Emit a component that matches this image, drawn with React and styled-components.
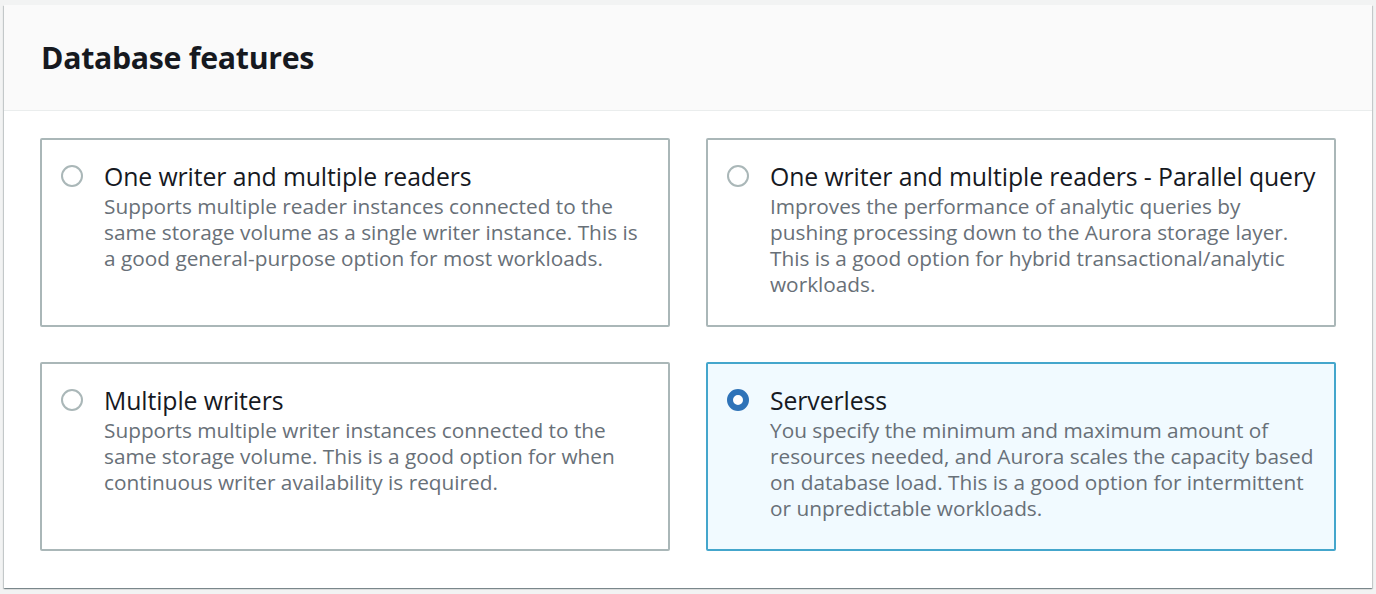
import React, { useState } from "react";
import styled, { createGlobalStyle } from "styled-components";

const Global = createGlobalStyle`
  html, body { margin: 0; padding: 0; background: #f2f3f3; }
  body { font-family: "Open Sans", "Noto Sans", Arial, sans-serif; -webkit-font-smoothing: antialiased; }
  * { box-sizing: border-box; }
`;

const Page = styled.div`
  padding: 5px 4px 7px 4px;
`;

const Panel = styled.section`
  background: #ffffff;
  box-shadow: 0 1px 1px 0 rgba(0, 28, 36, 0.3), 1px 1px 1px 0 rgba(0, 28, 36, 0.15),
    -1px 1px 1px 0 rgba(0, 28, 36, 0.15);
`;

const Header = styled.header`
  background: #fafafa;
  border-bottom: 1px solid #eaeded;
  height: 106px;
  display: flex;
  align-items: center;
  padding: 0 37px;
`;

const Title = styled.h2`
  margin: 0;
  font-size: 30.3px;
  font-weight: 700;
  color: #16191f;
  letter-spacing: -0.3px;
`;

const Body = styled.div`
  padding: 27px 36px 37px 36px;
  display: grid;
  grid-template-columns: 1fr 1fr;
  gap: 35px 36px;
`;

const Tile = styled.label`
  display: flex;
  align-items: flex-start;
  gap: 21px;
  padding: 20px 12px 28px 19px;
  border: 2px solid ${(p) => (p.$selected ? "#44a6cc" : "#aab7b8")};
  border-radius: 2px;
  background: ${(p) => (p.$selected ? "#f1faff" : "#ffffff")};
  cursor: pointer;
`;

const Radio = styled.span`
  flex: none;
  width: 22px;
  height: 22px;
  margin-top: 5px;
  border-radius: 50%;
  border: ${(p) => (p.$checked ? "6px solid #2f73b8" : "2px solid #aab7b8")};
  background: #ffffff;
`;

const Text = styled.div`
  display: flex;
  flex-direction: column;
  min-width: 0;
`;

const OptionTitle = styled.div`
  font-size: 24.8px;
  line-height: 32px;
  margin-bottom: 1px;
  color: #16191f;
  white-space: nowrap;
  letter-spacing: -0.1px;
`;

const Description = styled.div`
  font-size: 20.8px;
  line-height: 26px;
  color: #687078;
  letter-spacing: 0;
`;

const options = [
  {
    id: "one",
    title: "One writer and multiple readers",
    lines: [
      "Supports multiple reader instances connected to the",
      "same storage volume as a single writer instance. This is",
      "a good general-purpose option for most workloads.",
    ],
  },
  {
    id: "pq",
    title: "One writer and multiple readers - Parallel query",
    lines: [
      "Improves the performance of analytic queries by",
      "pushing processing down to the Aurora storage layer.",
      "This is a good option for hybrid transactional/analytic",
      "workloads.",
    ],
  },
  {
    id: "multi",
    title: "Multiple writers",
    lines: [
      "Supports multiple writer instances connected to the",
      "same storage volume. This is a good option for when",
      "continuous writer availability is required.",
    ],
  },
  {
    id: "serverless",
    title: "Serverless",
    lines: [
      "You specify the minimum and maximum amount of",
      "resources needed, and Aurora scales the capacity based",
      "on database load. This is a good option for intermittent",
      "or unpredictable workloads.",
    ],
  },
];

export default function App() {
  const [selected, setSelected] = useState("serverless");
  return (
    <>
      <Global />
      <Page>
        <Panel>
          <Header>
            <Title>Database features</Title>
          </Header>
          <Body>
            {options.map((o) => (
              <Tile
                key={o.id}
                $selected={selected === o.id}
                onClick={() => setSelected(o.id)}
              >
                <Radio $checked={selected === o.id} />
                <Text>
                  <OptionTitle>{o.title}</OptionTitle>
                  <Description>
                    {o.lines.map((l, i) => (
                      <React.Fragment key={i}>
                        {l}
                        {i < o.lines.length - 1 && <br />}
                      </React.Fragment>
                    ))}
                  </Description>
                </Text>
              </Tile>
            ))}
          </Body>
        </Panel>
      </Page>
    </>
  );
}
